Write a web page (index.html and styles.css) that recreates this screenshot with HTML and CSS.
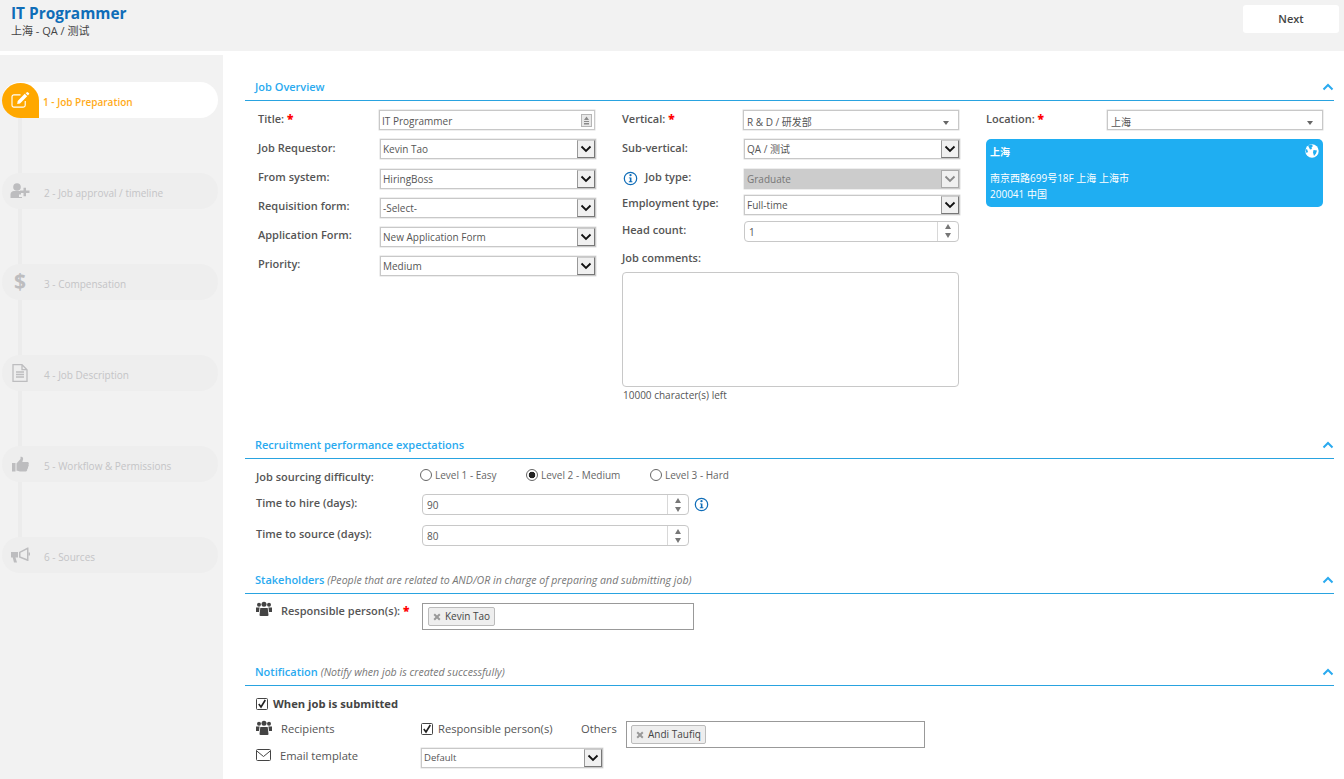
FILE: index.html
```html
<!DOCTYPE html>
<html lang="en">
<head>
<meta charset="utf-8">
<title>IT Programmer</title>
<link rel="stylesheet" href="styles.css">
</head>
<body>
<svg class="sprite" xmlns="http://www.w3.org/2000/svg">
  <symbol id="i-chev" viewBox="0 0 12 8"><path d="M1.5 6.5 6 2l4.500 4.500" fill="none" stroke="currentColor" stroke-width="2"/></symbol>
  <symbol id="i-down" viewBox="0 0 12 8"><path d="M1.500 1.500 6 6l4.500-4.500" fill="none" stroke="currentColor" stroke-width="1.800"/></symbol>
  <symbol id="i-info" viewBox="0 0 16 16"><circle cx="8" cy="8" r="6.600" fill="none" stroke="currentColor" stroke-width="1.300"/><circle cx="8" cy="4.500" r="1.200" fill="currentColor"/><path d="M6.300 6.800H9v4.200h1v1H6.200v-1h1.100V7.800h-1z" fill="currentColor"/></symbol>
  <symbol id="i-group" viewBox="0 0 16 16"><circle cx="3" cy="3.800" r="2" fill="currentColor"/><circle cx="13" cy="3.800" r="2" fill="currentColor"/><circle cx="8" cy="3.300" r="2.500" fill="currentColor"/><path d="M0 6.500h3.600L3 11H0zM16 6.500h-3.600L13 11h3z" fill="currentColor"/><path d="M4.300 7h7.400L12.500 14a1 1 0 0 1-1 1h-7a1 1 0 0 1-1-1z" fill="currentColor"/></symbol>
  <symbol id="i-check" viewBox="0 0 12 12"><rect x=".5" y=".5" width="11" height="11" rx="1" fill="#fff" stroke="#444"/><path d="M2.800 6 5 9l4.300-7" fill="none" stroke="#222" stroke-width="1.600"/></symbol>
  <symbol id="i-x" viewBox="0 0 8 8"><path d="M1.200 1.200l5.600 5.600M6.800 1.200 1.200 6.800" stroke="#999" stroke-width="2"/></symbol>
</svg>

<header class="topbar">
  <div class="topbar-title">
    <h1 class="job-name">IT Programmer</h1>
    <p class="job-meta">上海 - QA / 测试</p>
  </div>
  <button class="next-btn">Next</button>
</header>

<div class="layout">
  <nav class="sidebar">
    <div class="step step-active">
      <span class="step-badge">
        <svg width="19" height="17" viewBox="0 0 20 18"><path d="M15 9.500V14a2 2 0 0 1-2 2H3a2 2 0 0 1-2-2V5a2 2 0 0 1 2-2h7" fill="none" stroke="#fff" stroke-width="1.200"/><path d="M7 9.500 14.500 1.800l2.600 2.600-7.600 7.800-3 .5zM15.300 1l2.600 2.600 1-1.100a1 1 0 0 0 0-1.400L18 .4a1 1 0 0 0-1.400 0z" fill="#fff"/></svg>
      </span>
      <span class="step-label">1 - Job Preparation</span>
    </div>
    <div class="step">
      <span class="step-icon">
        <svg width="20" height="16" viewBox="0 0 20 16"><circle cx="7" cy="4" r="3.800" fill="currentColor"/><path d="M.5 15v-3.500C.5 9.500 2 8 4 8h6c1 0 1.700.4 2.300 1H11v2.600H9V14h3v1z" fill="currentColor"/><path d="M14 7h2.500v3H20v2.500h-3.500V16H14v-3.500h-3.500V10H14z" fill="currentColor" transform="translate(-.5 -2) scale(1 .95)"/></svg>
      </span>
      <span class="step-label">2 - Job approval / timeline</span>
    </div>
    <div class="step">
      <span class="step-icon step-dollar">$</span>
      <span class="step-label">3 - Compensation</span>
    </div>
    <div class="step">
      <span class="step-icon">
        <svg width="16" height="18" viewBox="0 0 16 18"><path d="M1 .7h9l5 5v11.600H1zM10 .7v5h5" fill="none" stroke="currentColor" stroke-width="1.300"/><path d="M4 8h8M4 10.500h8M4 13h8" stroke="currentColor" stroke-width="1.400"/></svg>
      </span>
      <span class="step-label">4 - Job Description</span>
    </div>
    <div class="step">
      <span class="step-icon">
        <svg width="17" height="17" viewBox="0 0 17 17"><path d="M0 7h3.500v8.500H0z" fill="currentColor"/><path d="M4.500 7.500 8.500 3V.8C10.500.3 11.500 1.800 11 3.500L10.300 6h5c1.500 0 1.900 1.400 1.200 2.500.5 1 .2 2-.5 2.500.2 1-.1 1.800-.8 2.200.1 1.500-.7 2.300-2 2.300H8c-1.500 0-2-.7-3.500-.7z" fill="currentColor"/></svg>
      </span>
      <span class="step-label">5 - Workflow &amp; Permissions</span>
    </div>
    <div class="step">
      <span class="step-icon">
        <svg width="19" height="16" viewBox="0 0 19 16"><path d="M0 5h7v5.500H4.500L6 15.500H3L1.700 10.500H0z" fill="currentColor"/><path d="M8 5 16.500.5l1 0v13.500h-1L8 10.500z" fill="currentColor"/><path d="M9.500 5.800 16 2.500v9.500L9.500 9.500z" fill="#eee"/><path d="M17.500 5.500h1.500v3h-1.500z" fill="currentColor"/></svg>
      </span>
      <span class="step-label">6 - Sources</span>
    </div>
  </nav>

  <main class="content">
    <section class="section section-overview">
      <div class="section-head">
        <h2 class="section-title">Job Overview</h2>
        <svg class="collapse"><use href="#i-chev"/></svg>
      </div>
      <div class="overview-grid">
        <div class="col col-first">
          <div class="row"><label class="label">Title: <b class="req">*</b></label>
            <div class="field field-text"><span>IT Programmer</span>
              <svg class="text-icon" width="11" height="13" viewBox="0 0 11 13"><rect x=".5" y=".5" width="10" height="12" fill="#e8e8e8" stroke="#b5b5b5"/><path d="M5.500 2.500 8 6H3zM3 7h5v1H3zM3 9h5v1.500H3z" fill="#8a8a8a"/></svg>
            </div>
          </div>
          <div class="row"><label class="label">Job Requestor:</label><div class="field"><span>Kevin Tao</span><i class="sel-btn"><svg><use href="#i-down"/></svg></i></div></div>
          <div class="row"><label class="label">From system:</label><div class="field"><span>HiringBoss</span><i class="sel-btn"><svg><use href="#i-down"/></svg></i></div></div>
          <div class="row"><label class="label">Requisition form:</label><div class="field"><span>-Select-</span><i class="sel-btn"><svg><use href="#i-down"/></svg></i></div></div>
          <div class="row"><label class="label">Application Form:</label><div class="field"><span>New Application Form</span><i class="sel-btn"><svg><use href="#i-down"/></svg></i></div></div>
          <div class="row"><label class="label">Priority:</label><div class="field"><span>Medium</span><i class="sel-btn"><svg><use href="#i-down"/></svg></i></div></div>
        </div>

        <div class="col col-second">
          <div class="row"><label class="label">Vertical: <b class="req">*</b></label><div class="field field-combo field-shift"><span>R &amp; D / 研发部</span><i class="caret"></i></div></div>
          <div class="row"><label class="label">Sub-vertical:</label><div class="field"><span>QA / 测试</span><i class="sel-btn"><svg><use href="#i-down"/></svg></i></div></div>
          <div class="row row-tight"><label class="label label-info"><svg class="info"><use href="#i-info"/></svg>Job type:</label><div class="field field-disabled"><span>Graduate</span><i class="sel-btn"><svg><use href="#i-down"/></svg></i></div></div>
          <div class="row row-tight"><label class="label">Employment type:</label><div class="field"><span>Full-time</span><i class="sel-btn"><svg><use href="#i-down"/></svg></i></div></div>
          <div class="row row-tall"><label class="label">Head count:</label><div class="field field-num field-count"><span>1</span><i class="spin"><b class="up"></b><b class="dn"></b></i></div></div>
          <label class="label label-block">Job comments:</label>
          <div class="comments"></div>
          <p class="hint">10000 character(s) left</p>
        </div>

        <div class="col col-location">
          <div class="row"><label class="label">Location: <b class="req">*</b></label><div class="field field-combo"><span>上海</span><i class="caret"></i></div></div>
          <div class="loc-card">
            <strong class="loc-name">上海</strong>
            <svg class="globe" width="14" height="14" viewBox="0 0 14 14"><circle cx="7" cy="7" r="6.700" fill="#fff"/><path d="M3 1.500 6.500.5 8 2 6.500 3.500 7 5 5 5.500zM8.500 6 12 6.500 11 9.500 9 12 8 8.500zM.5 6 2 5 3 8 1.500 9z" fill="#1faef2"/></svg>
            <p class="loc-addr">南京西路699号18F 上海 上海市<br>200041 中国</p>
          </div>
        </div>
      </div>
    </section>

    <section class="section section-perf">
      <div class="section-head">
        <h2 class="section-title">Recruitment performance expectations</h2>
        <svg class="collapse"><use href="#i-chev"/></svg>
      </div>
      <div class="perf-row perf-radios">
        <label class="label perf-label">Job sourcing difficulty:</label>
        <div class="radios">
          <span class="radio r1"><i class="dot"></i>Level 1 - Easy</span>
          <span class="radio r2"><i class="dot dot-on"></i>Level 2 - Medium</span>
          <span class="radio r3"><i class="dot"></i>Level 3 - Hard</span>
        </div>
      </div>
      <div class="perf-row perf-num">
        <label class="label perf-label">Time to hire (days):</label>
        <div class="field field-num field-wide"><span>90</span><i class="spin"><b class="up"></b><b class="dn"></b></i></div>
        <svg class="info info-side"><use href="#i-info"/></svg>
      </div>
      <div class="perf-row perf-num">
        <label class="label perf-label">Time to source (days):</label>
        <div class="field field-num field-wide"><span>80</span><i class="spin"><b class="up"></b><b class="dn"></b></i></div>
      </div>
    </section>

    <section class="section section-stake">
      <div class="section-head">
        <h2 class="section-title">Stakeholders <em class="section-note">(People that are related to AND/OR in charge of preparing and submitting job)</em></h2>
        <svg class="collapse"><use href="#i-chev"/></svg>
      </div>
      <div class="stake-row">
        <svg class="group"><use href="#i-group"/></svg>
        <label class="label stake-label">Responsible person(s): <b class="req">*</b></label>
        <div class="tagbox tagbox-stake"><span class="tag"><svg class="tag-x"><use href="#i-x"/></svg>Kevin Tao</span></div>
      </div>
    </section>

    <section class="section section-notify">
      <div class="section-head">
        <h2 class="section-title">Notification <em class="section-note">(Notify when job is created successfully)</em></h2>
        <svg class="collapse"><use href="#i-chev"/></svg>
      </div>
      <div class="notify-first"><svg class="check"><use href="#i-check"/></svg><strong class="notify-strong">When job is submitted</strong></div>
      <div class="notify-row notify-rec">
        <svg class="group group-rec"><use href="#i-group"/></svg>
        <span class="notify-label">Recipients</span>
        <svg class="check"><use href="#i-check"/></svg>
        <span class="notify-resp">Responsible person(s)</span>
        <span class="notify-others">Others</span>
        <div class="tagbox tagbox-others"><span class="tag"><svg class="tag-x"><use href="#i-x"/></svg>Andi Taufiq</span></div>
      </div>
      <div class="notify-row notify-mail">
        <svg class="mail" width="15" height="12" viewBox="0 0 15 12"><rect x=".5" y=".5" width="14" height="11" rx="1" fill="none" stroke="#444"/><path d="M.8 2 7.500 7.500 14.200 2" fill="none" stroke="#444"/></svg>
        <span class="notify-label notify-label-mail">Email template</span>
        <div class="field field-mail"><span>Default</span><i class="sel-btn"><svg><use href="#i-down"/></svg></i></div>
      </div>
    </section>
  </main>
</div>
</body>
</html>
```

FILE: styles.css
```css
* { box-sizing: border-box; }
html, body { margin: 0; padding: 0; }
body {
  height: 779px;
  overflow: hidden;
  background: #fff;
  font-family: "Open Sans", "Noto Sans CJK SC", sans-serif;
  color: #555;
}
.sprite { display: none; }

/* top bar */
.topbar {
  height: 51px;
  background: #f2f2f2;
  display: flex;
  justify-content: space-between;
  padding: 4px 5px 0 11px;
}
.job-name {
  margin: 0;
  font-size: 15.400px;
  line-height: 20px;
  font-weight: 700;
  color: #0f6db8;
}
.job-meta {
  margin: 0;
  font-size: 11px;
  line-height: 14px;
  color: #444;
}
.next-btn {
  width: 96px;
  height: 28px;
  margin-top: 1px;
  border: 0;
  border-radius: 3px;
  background: #fff;
  padding: 0 0 2px;
  font: 600 11px "Open Sans", sans-serif;
  color: #444;
}

/* layout */
.layout { display: flex; margin-top: 4px; height: 724px; }
.sidebar {
  width: 223px;
  flex: none;
  background: #f2f2f2;
  padding: 27px 5px 0 2px;
  display: flex;
  flex-direction: column;
  gap: 55px;
}
.step {
  position: relative;
  height: 36px;
  width: 216px;
  background: #eee;
  border-radius: 18px;
  display: flex;
  align-items: center;
  color: #bdbdbf;
}
.step::after {
  content: "";
  position: absolute;
  left: 16px;
  top: 36px;
  width: 4px;
  height: 55px;
  background: #ececec;
}
.step:last-child::after { display: none; }
.step-active { background: #fff; }
.step-badge {
  position: absolute;
  left: 0;
  top: 1px;
  width: 37px;
  height: 35px;
  background: #ffa800;
  border-radius: 50% 50% 0 50%;
  display: flex;
  align-items: center;
  justify-content: center;
}
.step-icon {
  position: absolute;
  left: 8px;
  top: 8px;
  width: 20px;
  height: 20px;
  display: flex;
  align-items: center;
  justify-content: center;
}
.step-dollar { font-size: 21px; font-weight: 700; line-height: 20px; top: 7px; }
.step-label {
  margin-left: 42px;
  padding-top: 3px;
  font-size: 10px;
  line-height: 14px;
  color: #c4c4c6;
}
.step-active .step-label { color: #ffab1a; font-weight: 600; margin-left: 41px; }

/* content */
.content { flex: 1; padding: 22px 10px 0 22px; min-width: 0; }
.section-head {
  height: 24px;
  border-bottom: 1px solid #29a3e0;
  display: flex;
  justify-content: space-between;
  align-items: center;
  padding: 0 0 3px 10px;
}
.section-title {
  margin: 0;
  font-size: 11px;
  line-height: 16px;
  font-weight: 600;
  color: #2aaaef;
}
.section-stake .section-title { margin-top: -1px; }
.section-note {
  font-size: 10.600px;
  font-weight: 400;
  color: #777;
}
.collapse { width: 12px; height: 8px; color: #2aaaef; }

.section-overview { height: 358px; }
.section-perf { height: 135px; }
.section-stake { height: 92px; }

/* overview */
.overview-grid {
  display: grid;
  grid-template-columns: 364px 364px 1fr;
  padding: 9px 11px 0 13px;
}
.col { min-width: 0; }
.row {
  display: flex;
  height: 20px;
  margin-bottom: 9.250px;
}
.row-tight { margin-bottom: 6px; }
.row-tall { height: 21px; margin-bottom: 8px; }
.label {
  flex: 0 0 122px;
  font-size: 11px;
  line-height: 18px;
  font-weight: 600;
  color: #555;
}
.col-first .row:nth-child(n+3) .label { margin-top: -1px; }
.row-tight .label { margin-top: -1px; }
.label-block { display: block; line-height: 18px; margin-top: -1px; }
.label-info { display: flex; align-items: flex-start; }
.req { color: #f00; font-size: 12px; }
.info { width: 15px; height: 15px; color: #0f6db8; flex: none; }
.label-info .info { margin: 3px 7px 0 1px; }

.field {
  position: relative;
  width: 216px;
  height: 20px;
  border: 1px solid #c8c8c8;
  box-shadow: 0 0 0 .5px #ddd;
  background: #fff;
  font-size: 10px;
  line-height: 18px;
  color: #555;
  display: flex;
  align-items: center;
  padding-left: 2px;
}
.field-text { margin-left: -1px; }
.field-text > span { padding-top: 2px; }
.field-shift { margin-left: -1px; }
.sel-btn {
  position: absolute;
  right: 0;
  top: 0;
  bottom: 0;
  width: 18px;
  background: #f0f0f0;
  border: 1px solid #777;
  border-top-color: #ccc;
  border-left-color: #999;
  display: flex;
  align-items: center;
  justify-content: center;
  color: #111;
}
.sel-btn svg { width: 12px; height: 8px; }
.field-disabled { background: #ccc; border-color: #ccc; color: #777; }
.field-disabled .sel-btn { color: #888; border-color: #aaa; }
.text-icon { position: absolute; right: 2px; top: 3px; }
.field-combo > span { padding-top: 3px; padding-left: 1px; }
.caret {
  position: absolute;
  right: 9px;
  top: 10px;
  border: 3.500px solid transparent;
  border-top: 4px solid #666;
  border-bottom: 0;
}
.field-num {
  height: 21px;
  border-radius: 4px;
  box-shadow: none;
  padding-left: 4px;
}
.field-count { width: 215px; }
.field-count > span { padding-top: 2px; }
.spin {
  position: absolute;
  right: 0;
  top: 0;
  bottom: 0;
  width: 21px;
  border-left: 1px solid #d8d8d8;
  display: flex;
  flex-direction: column;
  align-items: center;
  justify-content: center;
  gap: 4px;
}
.spin b { width: 0; height: 0; border: 3.500px solid transparent; }
.spin .up { border-bottom: 5px solid #777; border-top: 0; }
.spin .dn { border-top: 5px solid #777; border-bottom: 0; }

.label-block + .comments { margin-top: 5px; }
.comments {
  width: 337px;
  height: 115px;
  border: 1px solid #c8c8c8;
  border-radius: 4px;
  background: #fff;
}
.hint { margin: 1px 0 0 1px; font-size: 10px; line-height: 14px; color: #555; }

.col-location .label { flex-basis: 121px; }
.loc-card {
  position: relative;
  width: 337px;
  height: 68px;
  margin-top: -0.250px;
  background: #1faef2;
  border-radius: 5px;
  color: #fff;
  padding: 6px 4px;
  font-size: 10px;
  line-height: 16px;
}
.loc-name { display: block; font-size: 10px; line-height: 14px; font-weight: 700; }
.loc-addr { margin: 11px 0 0; }
.globe { position: absolute; right: 4px; top: 5px; }

/* performance */
.perf-row { display: flex; padding-left: 11px; }
.perf-label { flex: 0 0 166px; }
.perf-radios { height: 35px; padding-top: 9px; }
.radios { display: flex; font-size: 10px; color: #666; margin-top: -1px; }
.radio { display: flex; align-items: center; height: 16px; }
.r1 { width: 106px; margin-left: -2px; }
.r2 { width: 124px; }
.dot {
  width: 12px;
  height: 12px;
  border: 1px solid #666;
  border-radius: 50%;
  margin-right: 3px;
  background: #fff;
  flex: none;
}
.dot-on { background: radial-gradient(circle, #222 0 3px, #fff 3.600px); }
.perf-num { height: 31px; }
.field-wide { width: 267px; }
.info-side { margin: 3px 0 0 5px; }

/* stakeholders */
.stake-row { display: flex; padding: 7px 0 0 11px; }
.group { width: 16px; height: 16px; color: #444; flex: none; }
.stake-label { flex: 0 0 141px; margin-left: 9px; padding-top: 1px; }
.tagbox {
  display: flex;
  align-items: flex-start;
  border: 1px solid #999;
  background: #fff;
  height: 27px;
  padding: 3px 0 0 5px;
}
.tagbox-stake { width: 272px; margin-top: 2px; }
.tag {
  display: flex;
  align-items: center;
  height: 19px;
  padding: 0 4px 1px;
  border: 1px solid #bbb;
  border-radius: 2px;
  background: #eee;
  font-size: 10px;
  color: #444;
}
.tag-x { width: 8px; height: 8px; margin: 2px 4px 0 0; }

/* notification */
.notify-first { display: flex; align-items: center; height: 13px; margin: 11px 0 0 11px; }
.check { width: 12px; height: 12px; flex: none; }
.notify-strong { font-size: 11.200px; font-weight: 700; color: #444; margin-left: 5px; }
.notify-row { display: flex; margin-left: 11px; }
.notify-rec { height: 27px; margin-top: 11px; align-items: flex-start; }
.group-rec { margin-top: -1px; }
.notify-label { flex: 0 0 140px; margin-left: 9px; font-size: 11.200px; line-height: 16px; color: #555; }
.notify-rec .check { margin: 2px 0 0 0; }
.notify-resp { width: 143px; margin-left: 5px; font-size: 11.200px; line-height: 16px; }
.notify-others { width: 45px; font-size: 11.200px; line-height: 16px; }
.tagbox-others { width: 299px; padding-left: 4px; }
.notify-mail { height: 20px; }
.mail { margin-top: 1px; flex: none; }
.notify-label-mail { margin-left: 9px; flex-basis: 141px; line-height: 16px; }
.field-mail { width: 182px; font-size: 9.500px; padding-left: 2px; }
```
